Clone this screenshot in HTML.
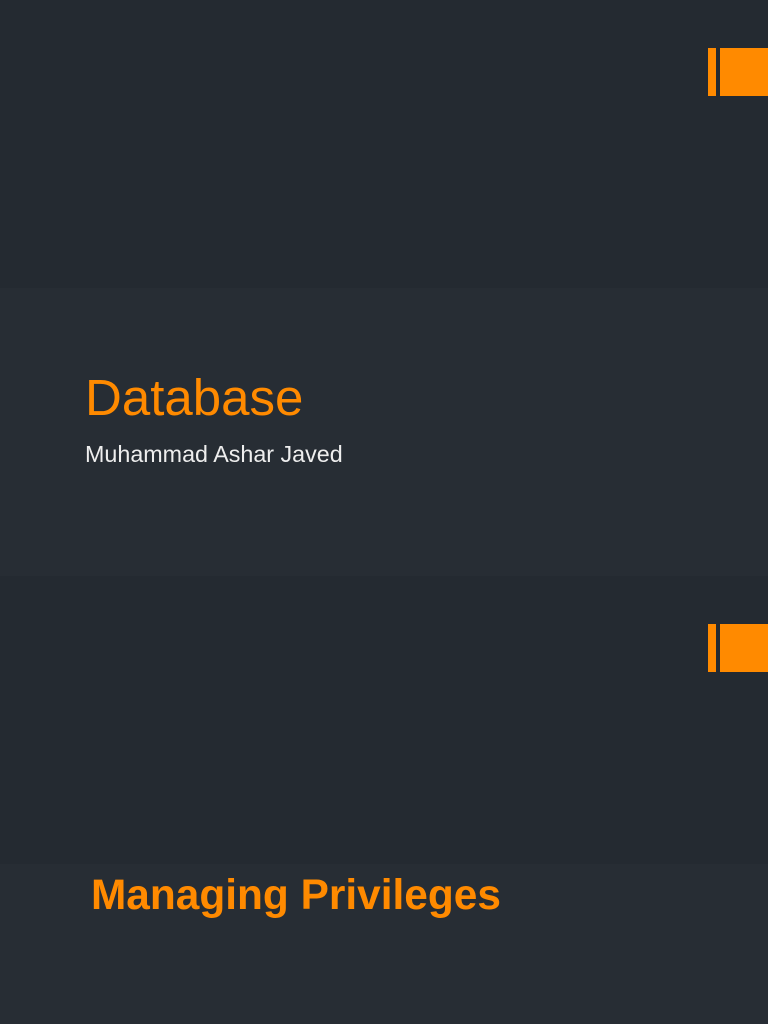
<!DOCTYPE html>
<html><head><style>
html,body{margin:0;padding:0;width:768px;height:1024px;overflow:hidden;background:#242a31;font-family:"Liberation Sans",sans-serif;}
.b{position:absolute;left:0;width:768px;}
.t{position:absolute;white-space:nowrap;line-height:1;}
.o{position:absolute;background:#ff8a00;}
</style></head><body>
<div class="b" style="top:0;height:288px;background:#242a31"></div>
<div class="b" style="top:288px;height:288px;background:#272d34"></div>
<div class="b" style="top:576px;height:288px;background:#242a31"></div>
<div class="b" style="top:864px;height:160px;background:#272d34"></div>
<div class="o" style="left:708px;top:48px;width:8px;height:48px"></div>
<div class="o" style="left:720px;top:48px;width:48px;height:48px"></div>
<div class="o" style="left:708px;top:624px;width:8px;height:48px"></div>
<div class="o" style="left:720px;top:624px;width:48px;height:48px"></div>
<div class="t" style="left:85px;top:372px;font-size:51px;color:#ff8a00">Database</div>
<div class="t" style="left:85px;top:443px;font-size:23.3px;color:#eeeeee">Muhammad Ashar Javed</div>
<div class="t" style="left:91px;top:874px;font-size:42.4px;font-weight:bold;color:#ff8a00">Managing Privileges</div>
</body></html>
